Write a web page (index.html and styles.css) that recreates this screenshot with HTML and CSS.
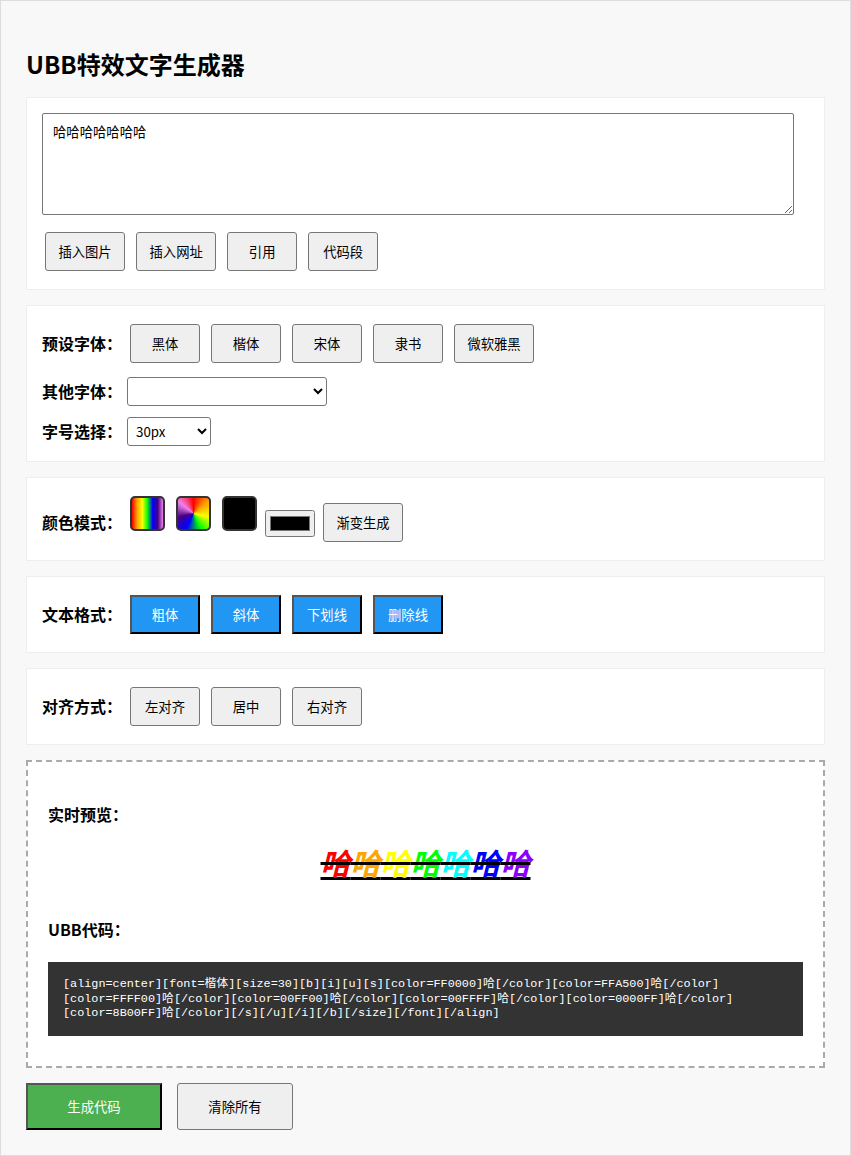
FILE: index.html
```html
<!DOCTYPE html>
<html lang="zh-CN">
<head>
<meta charset="utf-8">
<title>UBB特效文字生成器</title>
<link rel="stylesheet" href="styles.css">
</head>
<body>
<div class="container">
  <h1 class="title">UBB特效文字生成器</h1>

  <div class="panel">
    <textarea class="input-text">哈哈哈哈哈哈哈</textarea>
    <div class="row">
      <button class="btn">插入图片</button>
      <button class="btn">插入网址</button>
      <button class="btn">引用</button>
      <button class="btn">代码段</button>
    </div>
  </div>

  <div class="panel">
    <div class="row spaced">
      <span class="label">预设字体：</span>
      <button class="btn">黑体</button>
      <button class="btn">楷体</button>
      <button class="btn">宋体</button>
      <button class="btn">隶书</button>
      <button class="btn">微软雅黑</button>
    </div>
    <div class="row spaced">
      <span class="label">其他字体：</span>
      <select class="select select-font"><option></option></select>
    </div>
    <div class="row">
      <span class="label">字号选择：</span>
      <select class="select select-size"><option>30px</option></select>
    </div>
  </div>

  <div class="panel">
    <div class="row color-row">
      <span class="label">颜色模式：</span>
      <div class="swatch swatch-linear"></div>
      <div class="swatch swatch-conic"></div>
      <div class="swatch swatch-black"></div>
      <input class="color-input" type="color" value="#000000">
      <button class="btn">渐变生成</button>
    </div>
  </div>

  <div class="panel">
    <div class="row">
      <span class="label">文本格式：</span>
      <button class="btn active">粗体</button>
      <button class="btn active">斜体</button>
      <button class="btn active">下划线</button>
      <button class="btn active">删除线</button>
    </div>
  </div>

  <div class="panel">
    <div class="row">
      <span class="label">对齐方式：</span>
      <button class="btn">左对齐</button>
      <button class="btn">居中</button>
      <button class="btn">右对齐</button>
    </div>
  </div>

  <div class="preview-box">
    <h4 class="sub">实时预览：</h4>
    <div class="preview-text"><span class="fx"><span class="c1">哈</span><span class="c2">哈</span><span class="c3">哈</span><span class="c4">哈</span><span class="c5">哈</span><span class="c6">哈</span><span class="c7">哈</span></span></div>
    <h4 class="sub">UBB代码：</h4>
    <div class="code">[align=center][font=楷体][size=30][b][i][u][s][color=FF0000]哈[/color][color=FFA500]哈[/color][color=FFFF00]哈[/color][color=00FF00]哈[/color][color=00FFFF]哈[/color][color=0000FF]哈[/color][color=8B00FF]哈[/color][/s][/u][/i][/b][/size][/font][/align]</div>
  </div>

  <div class="actions">
    <button class="big-btn generate">生成代码</button>
    <button class="big-btn clear">清除所有</button>
  </div>
</div>
</body>
</html>
```

FILE: styles.css
```css
* {
  box-sizing: border-box;
}

body {
  margin: 0;
  font-family: "Noto Sans CJK SC", "Noto Sans", sans-serif;
  color: #000;
  background: #fff;
}

.container {
  border: 1px solid #ddd;
  background: #f8f8f8;
  padding: 25px;
}

.title {
  font-size: 24px;
  font-weight: bold;
  line-height: 35px;
  margin: 20px 0 16px;
}

.panel {
  background: #fff;
  border: 1px solid #eee;
  padding: 15px;
  margin-bottom: 15px;
}

.input-text {
  display: block;
  width: 752px;
  height: 102px;
  padding: 10px;
  border: 1px solid #767676;
  border-radius: 2px;
  font-family: "Noto Sans CJK SC", sans-serif;
  font-size: 13.33px;
  line-height: 15px;
  margin: 0 0 14px;
  resize: vertical;
}

.row {
  display: flex;
  align-items: center;
}

.row.spaced {
  margin-bottom: 10px;
}

.label {
  width: 80px;
  margin-right: 5px;
  font-size: 16px;
  font-weight: bold;
  line-height: 23px;
  white-space: nowrap;
}

.btn {
  min-width: 70px;
  height: 39px;
  margin: 3px 8px 3px 3px;
  padding: 0 12.4px;
  background: #efefef;
  border: 1px solid #767676;
  border-radius: 3px;
  font-family: "Noto Sans CJK SC", sans-serif;
  font-size: 13.33px;
  color: #000;
}

.btn.active {
  background: #2196f3;
  color: #fff;
  border: 2px solid;
  border-color: #555 #000 #000 #555;
  border-radius: 0;
}

.select {
  height: 29px;
  margin-top: 1px;
  border: 1px solid #767676;
  border-radius: 3px;
  background: #fff;
  font-family: "Noto Sans CJK SC", sans-serif;
  font-size: 13.33px;
  padding: 0 4px;
}

.select-font {
  width: 200px;
}

.select-size {
  width: 84px;
}

.color-row {
  align-items: flex-start;
  height: 52px;
}

.color-row .label {
  margin-top: 18px;
}

.swatch {
  width: 35px;
  height: 35px;
  margin: 3px 11px 0 0;
  border: 2px solid #333;
  border-radius: 5px;
}

.color-row .label + .swatch {
  margin-left: 3px;
}

.swatch-linear {
  background: linear-gradient(to right, #f00, #ffa500, #ff0, #0f0, #00f, #4b0082, #ee82ee);
}

.swatch-conic {
  background: conic-gradient(#f00, #ffa500, #ff0, #0f0, #00f, #4b0082, #ee82ee, #f00);
}

.swatch-black {
  background: #000;
  margin-right: 8px;
}

.color-input {
  width: 50px;
  height: 27px;
  margin: 17px 8px 0 0;
}

.color-row .btn {
  margin: 10px 0 3px 0;
}

.preview-box {
  background: #fff;
  border: 2px dashed #aaa;
  padding: 20px;
  margin-bottom: 15px;
}

.sub {
  font-size: 16px;
  font-weight: bold;
  line-height: 23px;
  margin: 21px 0;
}

.preview-text {
  text-align: center;
  font-size: 30px;
  line-height: 30px;
  height: 50px;
}

.fx {
  color: #000;
  font-weight: bold;
  font-style: italic;
  text-decoration: underline line-through;
  text-decoration-thickness: 3px;
  text-underline-offset: 2px;
}

.c1 { color: #ff0000; }
.c2 { color: #ffa500; }
.c3 { color: #ffff00; }
.c4 { color: #00ff00; }
.c5 { color: #00ffff; }
.c6 { color: #0000ff; }
.c7 { color: #8b00ff; }

.code {
  background: #333;
  color: #fff;
  padding: 15px;
  font-family: "Liberation Mono", "Noto Sans CJK SC", monospace;
  font-size: 11.8px;
  line-height: 14.5px;
  margin-bottom: 10px;
}

.actions {
  display: flex;
  gap: 15px;
}

.big-btn {
  height: 47px;
  padding: 0;
  font-family: "Noto Sans CJK SC", sans-serif;
  font-size: 13.33px;
}

.generate {
  width: 136px;
  background: #4caf50;
  color: #fff;
  border: 2px solid;
  border-color: #555 #000 #000 #555;
  border-radius: 0;
}

.clear {
  width: 116px;
  background: #efefef;
  color: #000;
  border: 1px solid #767676;
  border-radius: 3px;
}
```
